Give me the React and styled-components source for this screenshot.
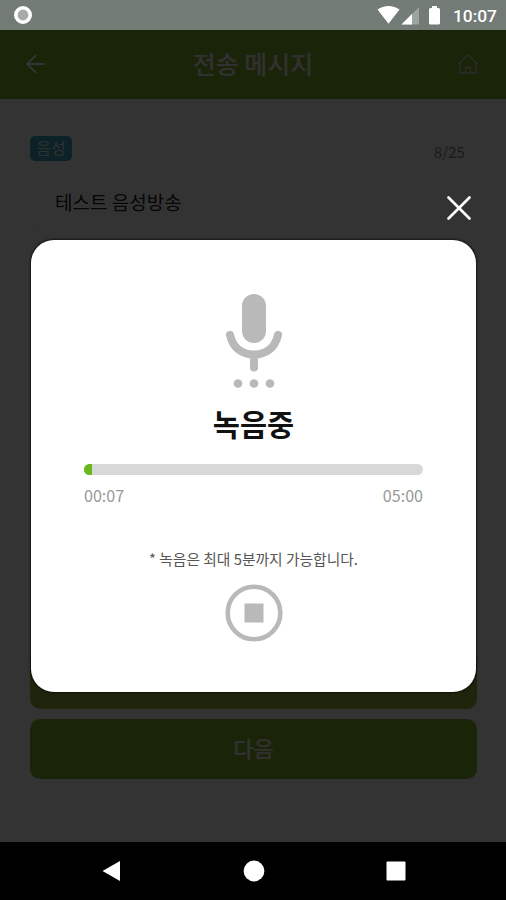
import React from 'react';
import styled, { createGlobalStyle } from 'styled-components';

// Styles

const GlobalStyle = createGlobalStyle`
  * {
    box-sizing: border-box;
  }
  body {
    margin: 0;
    background: #000;
    font-family: 'Noto Sans CJK KR', sans-serif;
  }
  svg {
    display: block;
    flex: none;
  }
  button {
    padding: 0;
    border: 0;
    background: none;
    font: inherit;
  }
`;

const Phone = styled.div`
  display: flex;
  flex-direction: column;
  width: 506px;
  height: 900px;
  overflow: hidden;
`;

const StatusBar = styled.div`
  display: flex;
  align-items: center;
  height: 30px;
  padding: 0 9px 0 13px;
  background: #737b76;
`;

const StatusIcons = styled.div`
  display: flex;
  align-items: center;
  margin-left: auto;
`;

const Clock = styled.span`
  margin-left: 11px;
  padding-top: 2px;
  color: #fff;
  font: 500 17.4px/20px Roboto, sans-serif;
`;

const Screen = styled.div`
  position: relative;
  height: 812px;
  background: #fff;
`;

const Header = styled.header`
  display: flex;
  align-items: center;
  justify-content: space-between;
  height: 69px;
  padding: 0 27px 0 25px;
  background: #82b52d;
  border-bottom: 1px solid #739e2e;
`;

const Title = styled.h1`
  margin: 0 0 2px 3px;
  color: #f2f2f2;
  font-size: 25px;
  font-weight: 500;
  line-height: 36px;
`;

const Body = styled.main`
  display: flex;
  flex-direction: column;
  height: 743px;
  padding: 37px 29px 63px 30px;
`;

const FieldHead = styled.div`
  display: flex;
  align-items: flex-start;
  justify-content: space-between;
  height: 36px;
  padding-right: 12px;
`;

const Badge = styled.span`
  width: 42px;
  height: 25px;
  border-radius: 5px;
  background: #3fa9c2;
  color: #eee;
  font-size: 16px;
  line-height: 23px;
  text-align: center;
`;

const Counter = styled.span`
  padding-top: 3px;
  color: #888;
  font-size: 15.2px;
  line-height: 24px;
`;

const Field = styled.div`
  height: 60px;
  padding-left: 24px;
  border: 1px solid #f3f3f3;
  border-radius: 9px;
  color: #222;
  font-size: 19px;
  line-height: 58px;
`;

const Actions = styled.div`
  display: flex;
  flex-direction: column;
  gap: 10px;
  margin-top: auto;
`;

const ActionButton = styled.button`
  height: 60px;
  padding-bottom: 4px;
  border-radius: 10px;
  background: ${(p) => p.$color || '#82b52d'};
  color: #f2f2f2;
  font-size: 22px;
  font-weight: 500;
  line-height: 56px;
`;

const Overlay = styled.div`
  position: absolute;
  inset: 0;
  display: flex;
  flex-direction: column;
  padding: 166px 30px 0 31px;
  background: rgba(0, 0, 0, 0.8);
`;

const CloseButton = styled.button`
  align-self: flex-end;
  height: 24px;
  margin: 0 5px 20px 0;
`;

const Modal = styled.section`
  display: flex;
  flex-direction: column;
  align-items: center;
  height: 452px;
  padding: 53px 53px 0;
  border-radius: 23px;
  background: #fff;
  box-shadow: 0 0 2px 1px rgba(0, 0, 0, 0.6);
`;

const ModalTitle = styled.h2`
  margin: 12px 0 0;
  color: #111;
  font-size: 29.5px;
  font-weight: 700;
  line-height: 44px;
`;

const Track = styled.div`
  width: 339px;
  height: 11px;
  margin-top: 19px;
  border-radius: 6px;
  background: #d8d8d8;
  overflow: hidden;
`;

const Progress = styled.div`
  height: 100%;
  background: #6ab81c;
`;

const Times = styled.div`
  display: flex;
  justify-content: space-between;
  width: 339px;
  margin-top: 8px;
  color: #999;
  font-size: 16.1px;
  line-height: 24px;
`;

const Hint = styled.p`
  margin: 40px 0 0;
  color: #555;
  font-size: 14.75px;
  line-height: 24px;
  white-space: nowrap;
`;

const StopButton = styled.button`
  margin-top: 13px;
`;

const NavBar = styled.nav`
  display: flex;
  align-items: center;
  justify-content: space-between;
  height: 58px;
  padding: 0 100px 0 101px;
  background: #000;
`;

// Icons

const StatusDot = () => (
  <svg width="20" height="20" viewBox="0 0 20 20">
    <circle cx="10" cy="10" r="7.2" fill="#a6aaa8" stroke="#fff" strokeWidth="3.6" />
  </svg>
);

const SignalIcons = () => (
  <svg width="65" height="20" viewBox="0 0 65 20" fill="#fff">
    <path d="M0.5 4.6C7 -.2 16 -.2 22.5 4.6L11.5 18.8Z" />
    <path d="M42 2V19.5H24.5Z" opacity=".3" />
    <path d="M35 9V19.5H24.5Z" />
    <path d="M55 1h5v2h1.5q1.500 0 1.500 1.500v13.500q0 1.500-1.500 1.500h-8q-1.500 0-1.500-1.500V4.500q0-1.500 1.500-1.500h1.500z" />
  </svg>
);

const BackIcon = () => (
  <svg width="21" height="20" viewBox="0 0 21 20" fill="none" stroke="#fff" strokeWidth="1.8">
    <path d="M11 1 2 10l9 9M2 10h18" />
  </svg>
);

const HomeIcon = () => (
  <svg width="22" height="20" viewBox="0 0 22 20" fill="none" stroke="#d5d5d5" strokeWidth="1.4">
    <path d="M1 10 11 1l10 9M3 8.500v10.500h16V8.500M8.500 19v-5.500h5v5.500" />
  </svg>
);

const CloseIcon = () => (
  <svg width="24" height="24" viewBox="0 0 24 24" stroke="#fff" strokeWidth="2.6" strokeLinecap="round">
    <path d="M1.500 1.500l21 21M22.500 1.500l-21 21" />
  </svg>
);

const MicIcon = () => (
  <svg width="58" height="96" viewBox="0 0 58 96" fill="#b9b9b9">
    <rect x="17" y="1" width="24" height="49" rx="12" />
    <path
      d="M5 42C8 55 17 61.500 29 61.500S50 55 53 42M29 62v12.500"
      fill="none"
      stroke="#b9b9b9"
      strokeWidth="8"
      strokeLinecap="round"
    />
    <circle cx="13" cy="90.500" r="4.300" />
    <circle cx="29" cy="90.500" r="4.300" />
    <circle cx="45" cy="90.500" r="4.300" />
  </svg>
);

const StopIcon = () => (
  <svg width="58" height="58" viewBox="0 0 58 58">
    <circle cx="29" cy="29" r="26.300" fill="none" stroke="#b9b9b9" strokeWidth="4.600" />
    <rect x="19.500" y="19.500" width="19" height="19" fill="#b9b9b9" />
  </svg>
);

// Component
const App = () => {
  const elapsed = 7;
  const max = 300;

  return (
    <Phone>
      <GlobalStyle />
      <StatusBar>
        <StatusDot />
        <StatusIcons>
          <SignalIcons />
          <Clock>10:07</Clock>
        </StatusIcons>
      </StatusBar>

      <Screen>
        <Header>
          <BackIcon />
          <Title>전송 메시지</Title>
          <HomeIcon />
        </Header>
        <Body>
          <FieldHead>
            <Badge>음성</Badge>
            <Counter>8/25</Counter>
          </FieldHead>
          <Field>테스트 음성방송</Field>
          <Actions>
            <ActionButton $color="#9cb742" />
            <ActionButton>다음</ActionButton>
          </Actions>
        </Body>

        <Overlay>
          <CloseButton aria-label="닫기">
            <CloseIcon />
          </CloseButton>
          <Modal>
            <MicIcon />
            <ModalTitle>녹음중</ModalTitle>
            <Track>
              <Progress style={{ width: `${(elapsed / max) * 100}%` }} />
            </Track>
            <Times>
              <span>00:07</span>
              <span>05:00</span>
            </Times>
            <Hint>* 녹음은 최대 5분까지 가능합니다.</Hint>
            <StopButton aria-label="정지">
              <StopIcon />
            </StopButton>
          </Modal>
        </Overlay>
      </Screen>

      <NavBar>
        <svg width="20" height="22" viewBox="0 0 20 22" fill="#fff">
          <path d="M19 1v20L1.500 11Z" />
        </svg>
        <svg width="22" height="22" viewBox="0 0 22 22" fill="#fff">
          <circle cx="11" cy="11" r="10.400" />
        </svg>
        <svg width="20" height="20" viewBox="0 0 20 20" fill="#fff">
          <rect x=".5" y=".5" width="19" height="19" rx="1" />
        </svg>
      </NavBar>
    </Phone>
  );
};

export default App;
